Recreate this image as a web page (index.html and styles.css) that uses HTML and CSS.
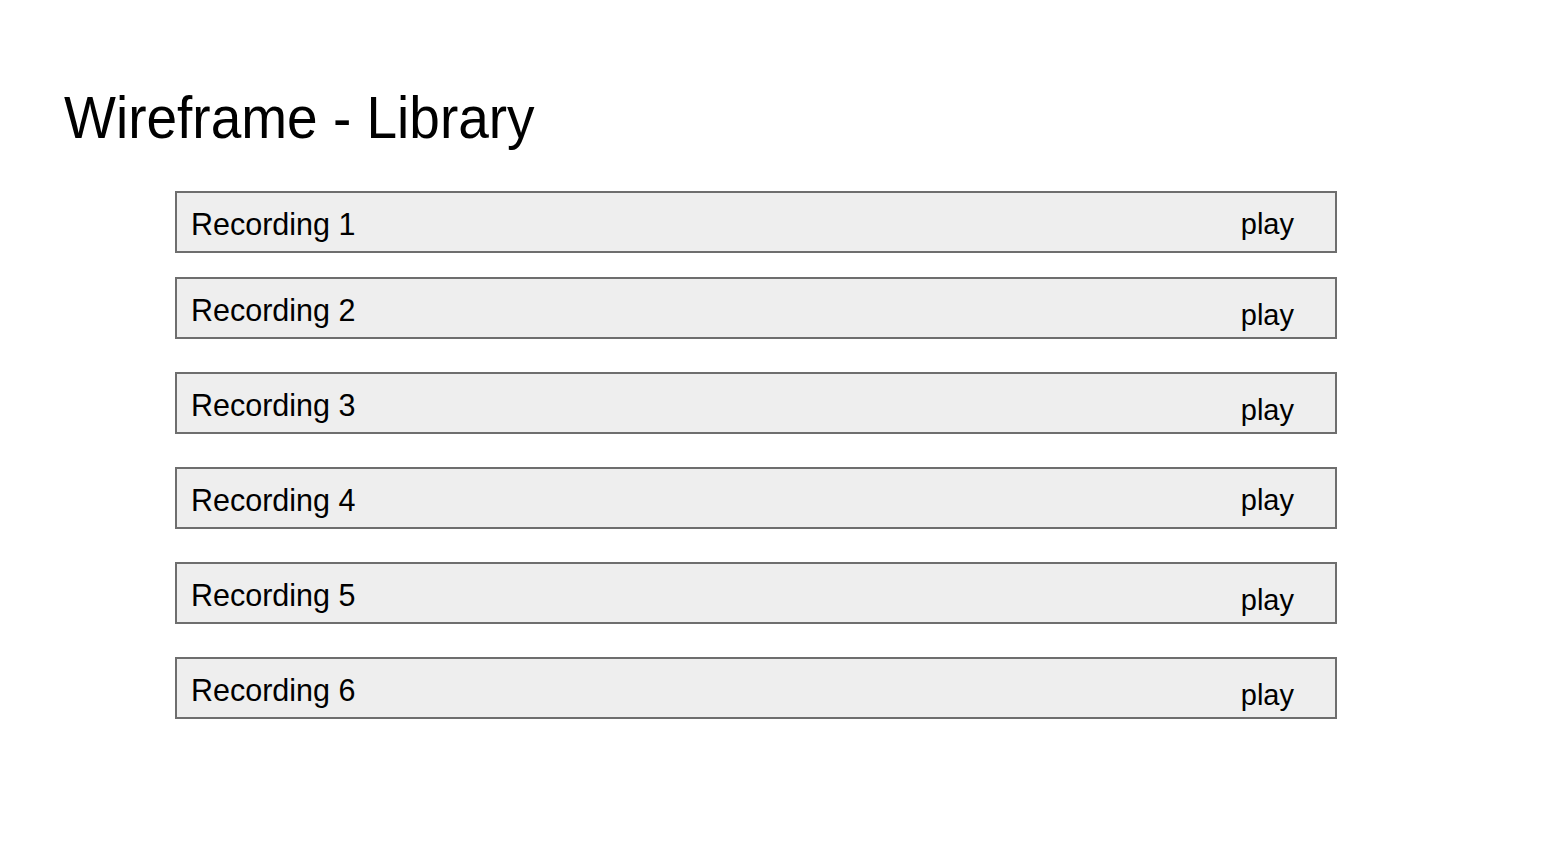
FILE: index.html
```html
<!DOCTYPE html>
<html lang="en">
<head>
<meta charset="utf-8">
<title>Wireframe - Library</title>
<link rel="stylesheet" href="styles.css">
</head>
<body>
<main class="slide">
  <h1 class="title">Wireframe - Library</h1>
  <ul class="list">
    <li class="row"><span class="label">Recording 1</span><span class="play">play</span></li>
    <li class="row row--tight"><span class="label">Recording 2</span><span class="play play--low">play</span></li>
    <li class="row"><span class="label">Recording 3</span><span class="play play--low">play</span></li>
    <li class="row"><span class="label">Recording 4</span><span class="play">play</span></li>
    <li class="row"><span class="label">Recording 5</span><span class="play play--low">play</span></li>
    <li class="row"><span class="label">Recording 6</span><span class="play play--low">play</span></li>
  </ul>
</main>
</body>
</html>
```
FILE: styles.css
```css
html, body {
  margin: 0;
  padding: 0;
  background: #ffffff;
}

body {
  font-family: "Liberation Sans", Arial, sans-serif;
  color: #000000;
}

.slide {
  width: 1555px;
  height: 863px;
  padding: 92px 0 0 0;
  box-sizing: border-box;
}

.title {
  margin: 0 0 0 64px;
  font-size: 55px;
  font-weight: normal;
  line-height: 56px;
  height: 56px;
  transform: scaleY(1.08);
  transform-origin: left bottom;
}

.list {
  list-style: none;
  margin: 43px 0 0 175px;
  padding: 0;
  width: 1162px;
  display: flex;
  flex-direction: column;
}

.row {
  box-sizing: border-box;
  height: 62px;
  border: 2px solid #6e6e6e;
  background: #eeeeee;
  display: flex;
  align-items: flex-start;
  justify-content: space-between;
  padding: 15px 41px 0 14px;
  font-size: 29px;
  line-height: 33px;
}

.label {
  font-size: 30.5px;
}

.row + .row {
  margin-top: 33px;
}

.row + .row--tight {
  margin-top: 24px;
}

.play--low {
  margin-top: 5px;
}
```
